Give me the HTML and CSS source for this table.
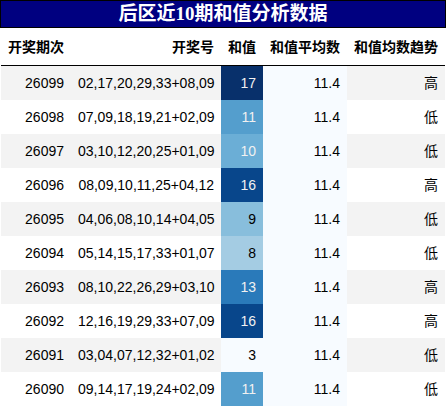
FILE: index.html
```html
<!DOCTYPE html>
<html lang="zh-CN">
<head>
  <meta charset="UTF-8">
  <meta name="viewport" content="width=device-width, initial-scale=1.0">
  <title>后区近10期和值分析数据</title>
  <link rel="stylesheet" href="styles.css">
</head>
<body>
  <div class="title">后区近10期和值分析数据</div>

  <table class="data">
    <colgroup>
      <col class="c-issue">
      <col class="c-nums">
      <col class="c-sum">
      <col class="c-avg">
      <col class="c-trend">
    </colgroup>
    <thead>
      <tr>
        <th>开奖期次</th>
        <th>开奖号</th>
        <th>和值</th>
        <th>和值平均数</th>
        <th>和值均数趋势</th>
      </tr>
    </thead>
    <tbody>
      <tr>
        <td>26099</td><td>02,17,20,29,33+08,09</td>
        <td class="sum v17">17</td><td class="avg">11.4</td><td>高</td>
      </tr>
      <tr>
        <td>26098</td><td>07,09,18,19,21+02,09</td>
        <td class="sum v11">11</td><td class="avg">11.4</td><td>低</td>
      </tr>
      <tr>
        <td>26097</td><td>03,10,12,20,25+01,09</td>
        <td class="sum v10">10</td><td class="avg">11.4</td><td>低</td>
      </tr>
      <tr>
        <td>26096</td><td>08,09,10,11,25+04,12</td>
        <td class="sum v16">16</td><td class="avg">11.4</td><td>高</td>
      </tr>
      <tr>
        <td>26095</td><td>04,06,08,10,14+04,05</td>
        <td class="sum v9">9</td><td class="avg">11.4</td><td>低</td>
      </tr>
      <tr>
        <td>26094</td><td>05,14,15,17,33+01,07</td>
        <td class="sum v8">8</td><td class="avg">11.4</td><td>低</td>
      </tr>
      <tr>
        <td>26093</td><td>08,10,22,26,29+03,10</td>
        <td class="sum v13">13</td><td class="avg">11.4</td><td>高</td>
      </tr>
      <tr>
        <td>26092</td><td>12,16,19,29,33+07,09</td>
        <td class="sum v16">16</td><td class="avg">11.4</td><td>高</td>
      </tr>
      <tr>
        <td>26091</td><td>03,04,07,12,32+01,02</td>
        <td class="sum v3">3</td><td class="avg">11.4</td><td>低</td>
      </tr>
      <tr>
        <td>26090</td><td>09,14,17,19,24+02,09</td>
        <td class="sum v11">11</td><td class="avg">11.4</td><td>低</td>
      </tr>
    </tbody>
  </table>
</body>
</html>
```

FILE: styles.css
```css
* { box-sizing: border-box; }

body {
  margin: 0;
  width: 446px;
  background: #fff;
  font-family: "Liberation Sans", "Noto Sans CJK SC", sans-serif;
  font-size: 14px;
  color: #000;
}

.title {
  height: 28px;
  border: 1px solid #000;
  background: #000080;
  color: #fff;
  font-family: "Liberation Serif", "Noto Sans CJK SC", serif;
  font-weight: bold;
  font-size: 19px;
  line-height: 26px;
  text-align: center;
}

.data {
  table-layout: fixed;
  width: 444px;
  margin: 0 1px;
  border-collapse: collapse;
  border-spacing: 0;
}

.c-issue { width: 70px; }
.c-nums { width: 150px; }
.c-sum { width: 42px; }
.c-avg { width: 84px; }
.c-trend { width: 98px; }

.data th,
.data td {
  padding: 0 7px;
  text-align: right;
  white-space: nowrap;
}

.data th {
  height: 37px;
  font-weight: bold;
  border-bottom: 1px solid #000;
}

.data td {
  height: 34px;
  line-height: 34px;
}

.data tbody tr:nth-child(odd) { background: #f3f3f3; }

/* 和值 gradient (Blues, 3 -> 17) */
.avg { background: #f7fbff; }
.sum { color: #f1f1f1; }
.v17 { background: #08306b; }
.v16 { background: #08468b; }
.v13 { background: #2a7aba; }
.v11 { background: #549ecd; }
.v10 { background: #6baed6; }
.v9 { background: #88bedc; color: #000; }
.v8 { background: #a4cce3; color: #000; }
.v3 { background: #f7fbff; color: #000; }
```
